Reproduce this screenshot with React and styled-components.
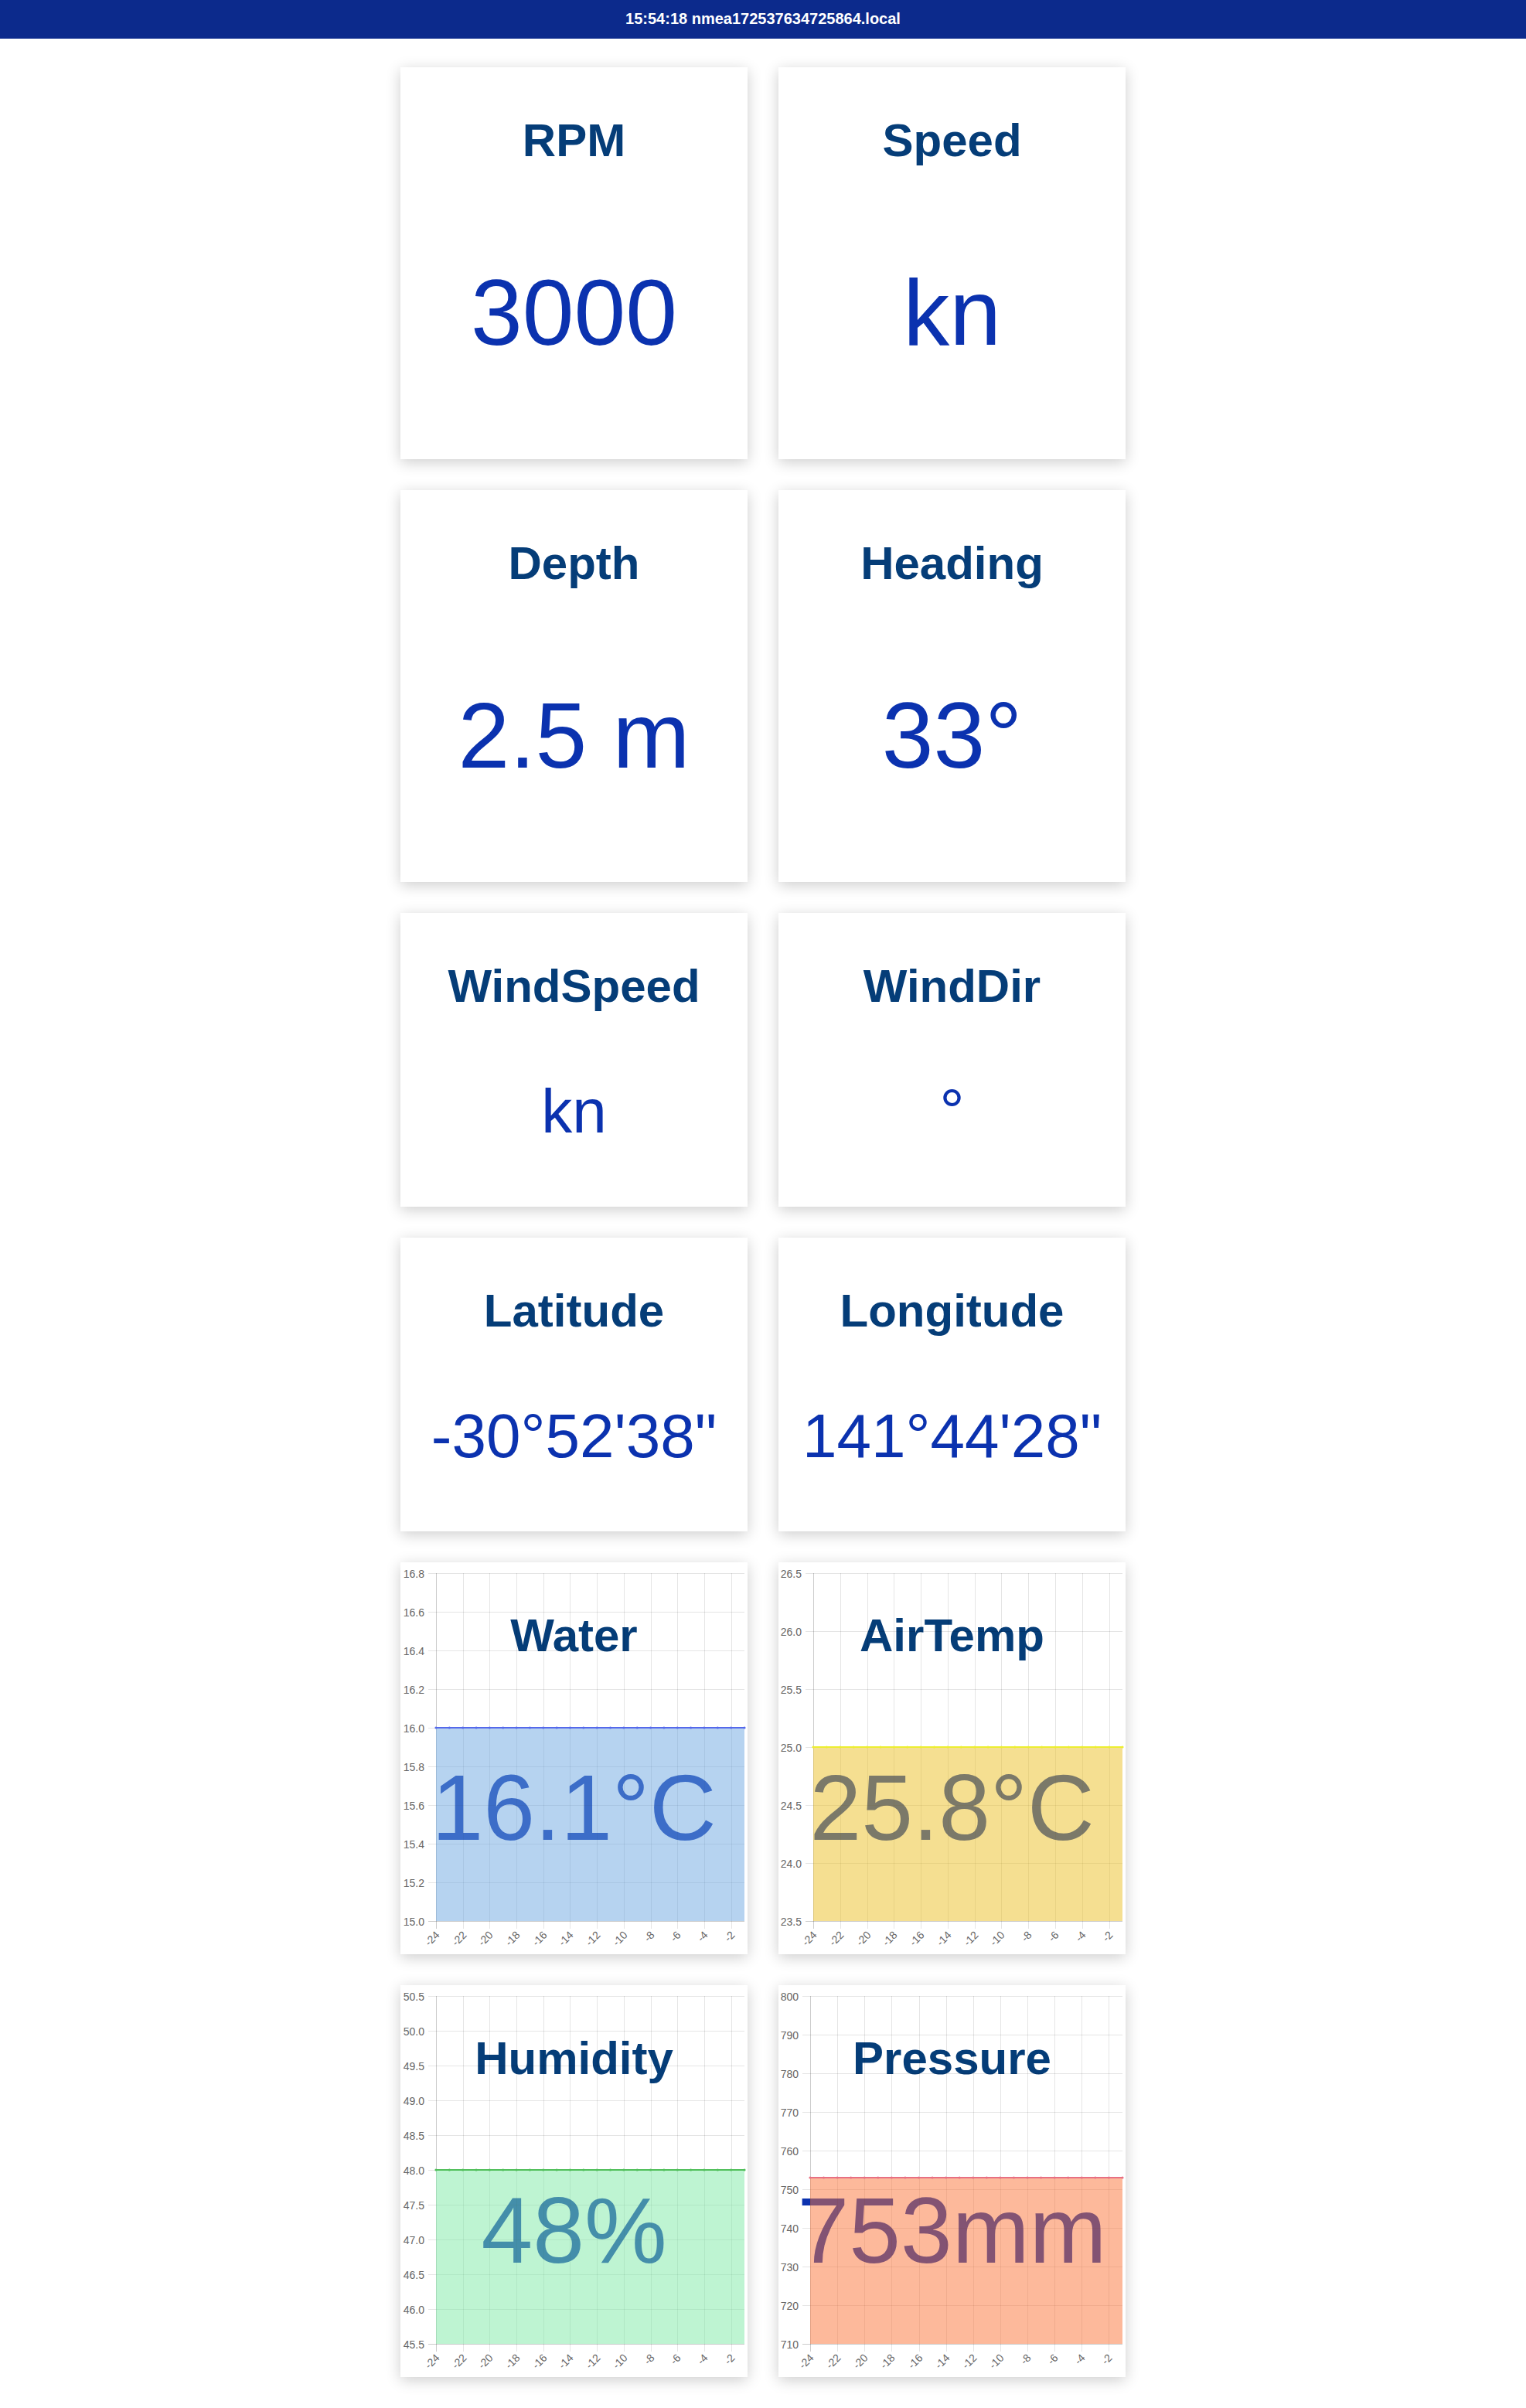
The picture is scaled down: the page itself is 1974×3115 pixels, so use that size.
import React from 'react'
import styled, { createGlobalStyle } from 'styled-components'

const GlobalStyle = createGlobalStyle`
  html, body {
    margin: 0;
    padding: 0;
    background: #fff;
    font-family: "Liberation Sans", Arial, sans-serif;
  }
`

const W = 449
const TALL = 507
const TOP = 14
const BOTTOM = 464
const RIGHT = 445

const tiles = [
  { title: 'RPM', value: '3000' },
  { title: 'Speed', value: 'kn' },
  { title: 'Depth', value: '2.5 m' },
  { title: 'Heading', value: '33°' },
  { title: 'WindSpeed', value: 'kn', small: true },
  { title: 'WindDir', value: '°', small: true },
  { title: 'Latitude', value: `-30°52'38"`, small: true },
  { title: 'Longitude', value: `141°44'28"`, small: true },
]

const charts = [
  {
    title: 'Water', value: '16.1°C', data: 16.0, left: 46,
    ticks: ['16.8', '16.6', '16.4', '16.2', '16.0', '15.8', '15.6', '15.4', '15.2', '15.0'],
    fill: 'rgba(109,167,225,0.5)', line: 'rgb(85,105,235)',
  },
  {
    title: 'AirTemp', value: '25.8°C', data: 25.0, left: 45,
    ticks: ['26.5', '26.0', '25.5', '25.0', '24.5', '24.0', '23.5'],
    fill: 'rgba(235,191,35,0.5)', line: 'rgb(236,238,48)',
  },
  {
    title: 'Humidity', value: '48%', data: 48.0, left: 46,
    ticks: ['50.5', '50.0', '49.5', '49.0', '48.5', '48.0', '47.5', '47.0', '46.5', '46.0', '45.5'],
    fill: 'rgba(125,233,165,0.5)', line: 'rgb(80,190,90)',
  },
  {
    title: 'Pressure', value: '753mm', data: 753, left: 41,
    ticks: ['800', '790', '780', '770', '760', '750', '740', '730', '720', '710'],
    fill: 'rgba(251,115,55,0.5)', line: 'rgb(232,112,130)',
  },
]

const Header = styled.header`
  height: 50px;
  background: #0c2a8c;
  color: #fff;
  font-weight: bold;
  font-size: 20px;
  line-height: 48px;
  text-align: center;
`

const Grid = styled.main`
  display: grid;
  grid-template-columns: repeat(2, ${W}px);
  justify-content: center;
  gap: 40px;
  padding: 37px 0 40px;
`

const Card = styled.section`
  position: relative;
  height: ${p => p.$h}px;
  background: #fff;
  box-shadow: 0 4px 18px rgba(0, 0, 0, 0.2);
  padding-top: 65px;
  box-sizing: border-box;
  display: flex;
  flex-direction: column;
  align-items: center;
  overflow: hidden;
`

const Title = styled.h2`
  margin: 0;
  font-size: 60px;
  line-height: 1;
  font-weight: bold;
  color: #053d78;
`

const Value = styled.div`
  margin-top: ${p => (p.$small ? 92 : 132)}px;
  font-size: ${p => (p.$small ? 80 : 120)}px;
  line-height: 1;
  color: #0b32af;
  white-space: nowrap;
`

// chart canvas lies over the title/value, like the original canvas overlay
const Plot = styled.svg`
  position: absolute;
  inset: 0;
  width: ${W}px;
  height: ${TALL}px;
  pointer-events: none;

  text {
    font-family: "Liberation Sans", Arial, sans-serif;
    font-size: 14px;
    fill: #666;
  }
`

const GridLine = styled.line`
  stroke: ${p => (p.$axis ? 'rgba(0,0,0,0.2)' : 'rgba(0,0,0,0.1)')};
  stroke-width: 1;
`

function Chart({ ticks, data, left, fill, line }) {
  const nums = ticks.map(Number)
  const max = nums[0]
  const min = nums[nums.length - 1]
  const y = v => TOP + ((max - v) / (max - min)) * (BOTTOM - TOP)
  const count = 24
  const step = (RIGHT - left) / (count - 1)
  const xs = Array.from({ length: count }, (_, i) => left + i * step)
  const vy = y(data)

  return (
    <Plot viewBox={`0 0 ${W} ${TALL}`}>
      {ticks.map((t, i) => {
        const yy = Math.round(TOP + (i * (BOTTOM - TOP)) / (ticks.length - 1)) + 0.5
        return (
          <g key={t}>
            <GridLine x1={left - 10} x2={RIGHT} y1={yy} y2={yy} $axis={i === ticks.length - 1} />
            <text x={left - 15} y={yy + 5} textAnchor="end">{t}</text>
          </g>
        )
      })}
      {xs.map((x, i) => {
        if (i % 2) return null
        const xx = Math.round(x) + 0.5
        const lx = xx + 5
        const ly = BOTTOM + 19
        return (
          <g key={i}>
            <GridLine x1={xx} x2={xx} y1={TOP} y2={BOTTOM + 10} $axis={i === 0} />
            <text x={lx} y={ly} textAnchor="end" transform={`rotate(-45 ${lx} ${ly})`}>
              {i - count}
            </text>
          </g>
        )
      })}
      <rect x={left} y={vy} width={RIGHT - left} height={BOTTOM - vy} fill={fill} />
      <line x1={left} x2={RIGHT} y1={vy} y2={vy} stroke={line} strokeWidth="2" />
      {xs.map((x, i) => (
        <circle key={i} cx={x} cy={vy} r="1.6" fill={line} />
      ))}
    </Plot>
  )
}

export default function App() {
  return (
    <>
      <GlobalStyle />
      <Header>15:54:18 nmea172537634725864.local</Header>
      <Grid>
        {tiles.map(t => (
          <Card key={t.title} $h={t.small ? 380 : TALL}>
            <Title>{t.title}</Title>
            <Value $small={t.small}>{t.value}</Value>
          </Card>
        ))}
        {charts.map(c => (
          <Card key={c.title} $h={TALL}>
            <Title>{c.title}</Title>
            <Value>{c.value}</Value>
            <Chart {...c} />
          </Card>
        ))}
      </Grid>
    </>
  )
}
